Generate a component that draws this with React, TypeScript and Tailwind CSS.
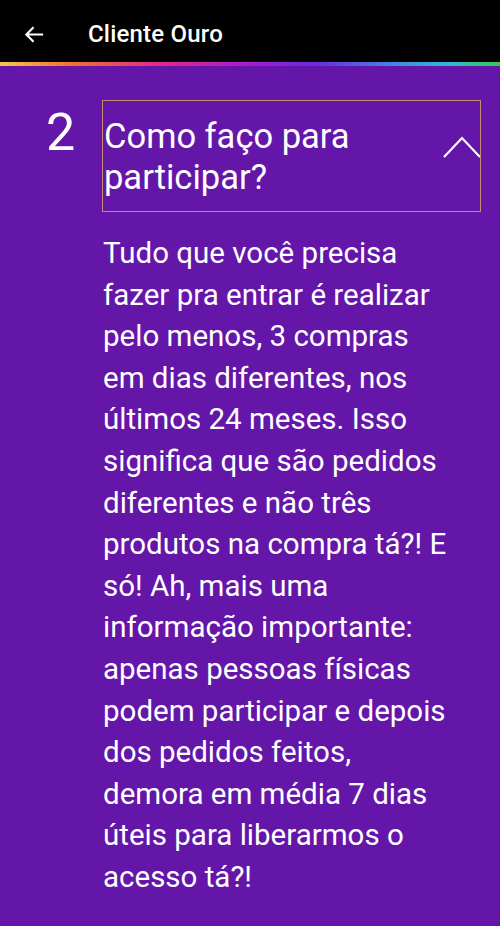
import React from 'react';

const answer =
    'Tudo que você precisa fazer pra entrar é realizar pelo menos, 3 compras em dias diferentes, nos últimos 24 meses. Isso significa que são pedidos diferentes e não três produtos na compra tá?! E só! Ah, mais uma informação importante: apenas pessoas físicas podem participar e depois dos pedidos feitos, demora em média 7 dias úteis para liberarmos o acesso tá?!';

const App = () => {
    return (
        <div className="w-[500px] h-[926px] bg-[#6416a9] overflow-hidden" style={{ fontFamily: 'Roboto, "Noto Sans", sans-serif' }}>
            {/* header */}
            <div className="h-[62px] bg-black flex items-center pt-[6px]">
                <svg className="ml-[23px] w-[23px] h-[23px]" viewBox="0 0 24 24" fill="none" stroke="white" strokeWidth="2.2">
                    <path d="M21 12H3.5M11 4.5L3.5 12l7.5 7.5" />
                </svg>
                <span className="ml-[42px] text-white text-[24px] font-medium tracking-[0.2px]">Cliente Ouro</span>
            </div>
            <div className="h-[4px] bg-[linear-gradient(90deg,#f7c453_0%,#f0742f_14%,#e2258f_33%,#a51bd0_50%,#6a2ae0_63%,#3f8fe0_80%,#2fb8d8_90%,#3cc64a_100%)]" />

            {/* question */}
            <div className="flex items-start mt-[34px]">
                <div className="w-[102px] pl-[46px] pt-[3px] text-white text-[52px] leading-[60px]">2</div>
                <div className="relative w-[379px] h-[112px] border-[1.5px] border-[#c98a70] pt-[15px] pl-[1px] overflow-hidden">
                    <p className="w-[320px] text-white text-[34.5px] leading-[41px]">Como faço para participar?</p>
                    <svg className="absolute right-[-2px] top-[34px] w-[40px] h-[24px]" viewBox="0 0 40 24" fill="none" stroke="white" strokeWidth="2.2">
                        <path d="M2 22L20 3l18 19" />
                    </svg>
                </div>
            </div>

            {/* answer */}
            <p className="ml-[103px] mt-[21px] w-[352px] text-white text-[29.5px] leading-[41.6px]">{answer}</p>
        </div>
    );
};

export default App;
